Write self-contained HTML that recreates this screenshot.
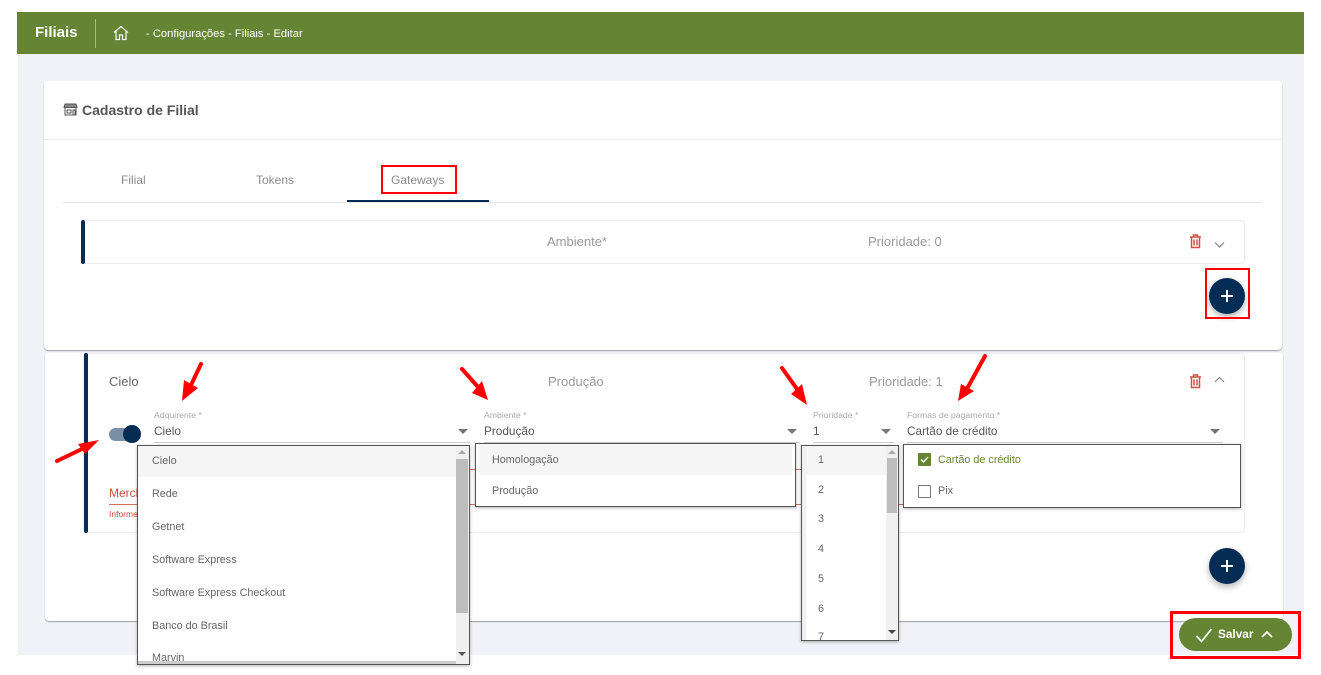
<!DOCTYPE html>
<html lang="pt"><head><meta charset="utf-8"><title>Filiais</title>
<style>
html,body{margin:0;padding:0;background:#fff}
body{width:1321px;height:675px;position:relative;overflow:hidden;font-family:"Liberation Sans",sans-serif;color:#555}
div,span,svg{position:absolute;box-sizing:border-box}
.t{white-space:nowrap;line-height:1}
.card{background:#fff;border-radius:4px;box-shadow:0 1px 1px rgba(0,0,0,.35)}
.acc{background:#fff;border:1px solid #ececec;border-radius:4px}
.bar{background:#052c54;border-radius:2px;width:4px}
.gray{color:#9a9a9a;font-size:14px}
.lab{color:#aaa;font-size:8.7px}
.val{color:#555;font-size:11.8px}
.line{height:1px;background:#cfcfcf}
.tri{width:0;height:0;border-left:5px solid transparent;border-right:5px solid transparent;border-top:5px solid #777}
.menu{background:#fff;border:1px solid #555;box-shadow:0 1px 3px rgba(0,0,0,.3)}
.it{color:#666;font-size:10.8px}
.fab{width:36px;height:36px;border-radius:50%;background:#052c54;box-shadow:0 3px 7px rgba(0,0,0,.3)}
.sb{background:#f0f0f0}.th{background:#bdbdbd}
</style></head><body>
<div style="left:18px;top:54px;width:1286px;height:601px;background:#f0f2f8"></div>
<div style="left:17px;top:12px;width:1287px;height:42px;background:#658535"></div>
<div class="t" style="left:35px;top:25px;color:#fff;font-size:15px;font-weight:bold">Filiais</div>
<div style="left:95px;top:19px;width:1px;height:29px;background:#a9bd8c"></div>
<svg style="left:113px;top:25px" width="16" height="16" viewBox="0 0 16 16" fill="none" stroke="#fff" stroke-width="1.2"><path d="M1 7.500 8 1.500l7 6M3 6.500V14.500h3.500v-4.500h3v4.500H13V6.500"/></svg>
<div class="t" style="left:146px;top:29px;color:#fff;font-size:11.2px">- Configurações - Filiais - Editar</div>

<div class="card" style="left:44px;top:81px;width:1238px;height:269px"></div>
<div style="left:44px;top:139px;width:1238px;height:1px;background:#eee"></div>
<svg style="left:63px;top:103px" width="15" height="13" viewBox="0 0 15 13" fill="#666" stroke="#555" stroke-width="1"><path fill="#888" d="M2 1h11l1 3.500H1z"/><path fill="none" d="M2 5v7h11V5M4 7h4v3H4zM10 7h2v5h-2z"/></svg>
<div class="t" style="left:82px;top:103px;font-size:14px;font-weight:bold;color:#555">Cadastro de Filial</div>
<div class="t gray" style="left:121px;top:174px;font-size:12px;color:#8a8a8a">Filial</div>
<div class="t gray" style="left:256px;top:174px;font-size:12px;color:#8a8a8a">Tokens</div>
<div class="t gray" style="left:391px;top:174px;font-size:12px;color:#8a8a8a">Gateways</div>
<div style="left:63px;top:202px;width:1198px;height:1px;background:#e8e8e8"></div>
<div style="left:347px;top:200px;width:142px;height:2px;background:#052c54"></div>
<div style="left:381px;top:165px;width:76px;height:29px;border:2px solid #f00"></div>

<div class="acc" style="left:81px;top:220px;width:1164px;height:44px"></div>
<div class="bar" style="left:81px;top:220px;height:44px"></div>
<div class="t gray" style="left:547px;top:235px;font-size:13px">Ambiente*</div>
<div class="t gray" style="left:868px;top:235px;font-size:13px">Prioridade: 0</div>
<svg style="left:1189px;top:234px" width="13" height="15" viewBox="0 0 13 15" fill="none" stroke="#d0523e" stroke-width="1.500"><path d="M1 3h11M4.500 3V1h4v2M2.500 3v10.500h8V3M5 5.500v6M8 5.500v6"/></svg>
<svg style="left:1214px;top:241px" width="11" height="8" viewBox="0 0 11 8" fill="none" stroke="#888" stroke-width="1.200"><path d="M1 1.500l4.500 4.500L10 1.500"/></svg>
<div class="fab" style="left:1209px;top:278px"></div>
<svg style="left:1219px;top:288px" width="16" height="16" viewBox="0 0 16 16" stroke="#fff" stroke-width="2"><path d="M8 2v12M2 8h12"/></svg>
<div style="left:1205px;top:268px;width:45px;height:51px;border:2px solid #f00"></div>

<div class="card" style="left:45px;top:353px;width:1238px;height:268px"></div>
<div class="acc" style="left:83px;top:353px;width:1162px;height:180px"></div>
<div class="bar" style="left:84px;top:353px;height:180px"></div>
<div class="t" style="left:109px;top:375px;font-size:13px;color:#666">Cielo</div>
<div class="t gray" style="left:548px;top:375px;font-size:13px">Produção</div>
<div class="t gray" style="left:869px;top:375px;font-size:13px">Prioridade: 1</div>
<svg style="left:1189px;top:374px" width="13" height="15" viewBox="0 0 13 15" fill="none" stroke="#d0523e" stroke-width="1.500"><path d="M1 3h11M4.500 3V1h4v2M2.500 3v10.500h8V3M5 5.500v6M8 5.500v6"/></svg>
<svg style="left:1214px;top:376px" width="11" height="8" viewBox="0 0 11 8" fill="none" stroke="#888" stroke-width="1.200"><path d="M1 6l4.500-4.500L10 6"/></svg>

<div style="left:109px;top:428px;width:30px;height:13px;border-radius:7px;background:#7a90a6"></div>
<div style="left:123px;top:425px;width:18px;height:18px;border-radius:50%;background:#052c54"></div>

<div class="t" style="left:109px;top:487px;font-size:12px;color:#c8503c">Merch</div>
<div style="left:109px;top:504px;width:1114px;height:1px;background:#d8705f"></div>
<div class="t" style="left:109px;top:510px;font-size:8.500px;color:#c8503c">Informe</div>
<div style="left:470px;top:469px;width:340px;height:1px;background:#d8705f"></div>

<div class="t lab" style="left:154px;top:411px">Adquirente *</div>
<div class="t val" style="left:154px;top:426px">Cielo</div>
<div class="tri" style="left:458px;top:429px"></div>
<div class="line" style="left:154px;top:442px;width:316px"></div>
<div class="t lab" style="left:484px;top:411px">Ambiente *</div>
<div class="t val" style="left:484px;top:426px">Produção</div>
<div class="tri" style="left:787px;top:429px"></div>
<div class="line" style="left:484px;top:442px;width:316px"></div>
<div class="t lab" style="left:813px;top:411px">Prioridade *</div>
<div class="t val" style="left:813px;top:426px">1</div>
<div class="tri" style="left:881px;top:429px"></div>
<div class="line" style="left:813px;top:442px;width:81px"></div>
<div class="t lab" style="left:907px;top:411px">Formas de pagamento *</div>
<div class="t val" style="left:907px;top:426px">Cartão de crédito</div>
<div class="tri" style="left:1210px;top:429px"></div>
<div class="line" style="left:907px;top:442px;width:316px"></div>

<div class="fab" style="left:1209px;top:548px"></div>
<svg style="left:1219px;top:558px" width="16" height="16" viewBox="0 0 16 16" stroke="#fff" stroke-width="2"><path d="M8 2v12M2 8h12"/></svg>

<!-- Adquirente menu -->
<div class="menu" style="left:137px;top:445px;width:333px;height:220px;overflow:hidden">
<div style="left:0;top:0;width:318px;height:31px;background:#f5f5f5"></div>
<div class="t it" style="left:14px;top:10px">Cielo</div>
<div class="t it" style="left:14px;top:43px">Rede</div>
<div class="t it" style="left:14px;top:76px">Getnet</div>
<div class="t it" style="left:14px;top:109px">Software Express</div>
<div class="t it" style="left:14px;top:142px">Software Express Checkout</div>
<div class="t it" style="left:14px;top:175px">Banco do Brasil</div>
<div class="t it" style="left:14px;top:207px">Marvin</div>
<div style="left:0;top:215px;width:318px;height:3px;background:#ccc"></div>
<div class="sb" style="left:318px;top:0;width:13px;height:218px"></div>
<div class="th" style="left:318px;top:13px;width:12px;height:154px"></div>
<div class="tri" style="left:320px;top:4px;border-left-width:4px;border-right-width:4px;border-top:0;border-bottom:4px solid #aaa"></div>
<div class="tri" style="left:320px;top:206px;border-left-width:4px;border-right-width:4px;border-top-width:4px;border-top-color:#555"></div>
</div>
<!-- Ambiente menu -->
<div class="menu" style="left:475px;top:443px;width:321px;height:64px">
<div style="left:3px;top:0;width:313px;height:31px;background:#f5f5f5"></div>
<div class="t it" style="left:16px;top:11px">Homologação</div>
<div class="t it" style="left:16px;top:42px">Produção</div>
</div>
<!-- Prioridade menu -->
<div class="menu" style="left:801px;top:445px;width:98px;height:196px;overflow:hidden">
<div style="left:4px;top:0;width:80px;height:29px;background:#f5f5f5"></div>
<div class="sb" style="left:0;top:0;width:4px;height:194px"></div>
<div class="t it" style="left:16px;top:9px">1</div>
<div class="t it" style="left:16px;top:39px">2</div>
<div class="t it" style="left:16px;top:68px">3</div>
<div class="t it" style="left:16px;top:98px">4</div>
<div class="t it" style="left:16px;top:128px">5</div>
<div class="t it" style="left:16px;top:158px">6</div>
<div class="t it" style="left:16px;top:186px">7</div>
<div class="sb" style="left:84px;top:0;width:12px;height:194px"></div>
<div class="th" style="left:85px;top:12px;width:10px;height:55px"></div>
<div class="tri" style="left:86px;top:4px;border-left-width:4px;border-right-width:4px;border-top:0;border-bottom:4px solid #aaa"></div>
<div class="tri" style="left:86px;top:184px;border-left-width:4px;border-right-width:4px;border-top-width:4px;border-top-color:#444"></div>
</div>
<!-- Formas menu -->
<div class="menu" style="left:903px;top:444px;width:338px;height:64px">
<div style="left:14px;top:8px;width:13px;height:13px;background:#658535;border-radius:1px"></div>
<svg style="left:16px;top:10px" width="9" height="9" viewBox="0 0 9 9" fill="none" stroke="#fff" stroke-width="1.400"><path d="M1 4.500l2.500 2.500L8 2"/></svg>
<div class="t it" style="left:34px;top:10px;color:#658535">Cartão de crédito</div>
<div style="left:14px;top:40px;width:13px;height:13px;border:1px solid #777;border-radius:1px"></div>
<div class="t it" style="left:34px;top:41px">Pix</div>
</div>

<!-- Salvar -->
<div style="left:1179px;top:618px;width:113px;height:33px;border-radius:17px;background:#658535"></div>
<svg style="left:1195px;top:627px" width="18" height="16" viewBox="0 0 18 16" fill="none" stroke="#fff" stroke-width="1.700"><path d="M1.500 9l5 5.500L16.500 2"/></svg>
<div class="t" style="left:1218px;top:629px;color:#fff;font-size:11.8px;font-weight:bold">Salvar</div>
<svg style="left:1261px;top:630px" width="12" height="9" viewBox="0 0 12 9" fill="none" stroke="#fff" stroke-width="1.800"><path d="M1 7l5-5 5 5"/></svg>
<div style="left:1170px;top:611px;width:131px;height:48px;border:3px solid #f00"></div>

<!-- Arrows -->
<svg style="left:0;top:0" width="1321" height="675" fill="#f00" stroke="none">
<g stroke="#f00" stroke-width="4" stroke-linecap="round"><path d="M201 364 191 385M462 369 478 387M782 368 797 389M985 356 968 387M57 461 82 449"/></g>
<path d="M182 401 184 380 198 388zM488 400 472 393 482 381zM807 405 791 394 802 384zM958 401 961 384 974 391zM99 440 78 444 85 454z"/>
</svg>
</body></html>
